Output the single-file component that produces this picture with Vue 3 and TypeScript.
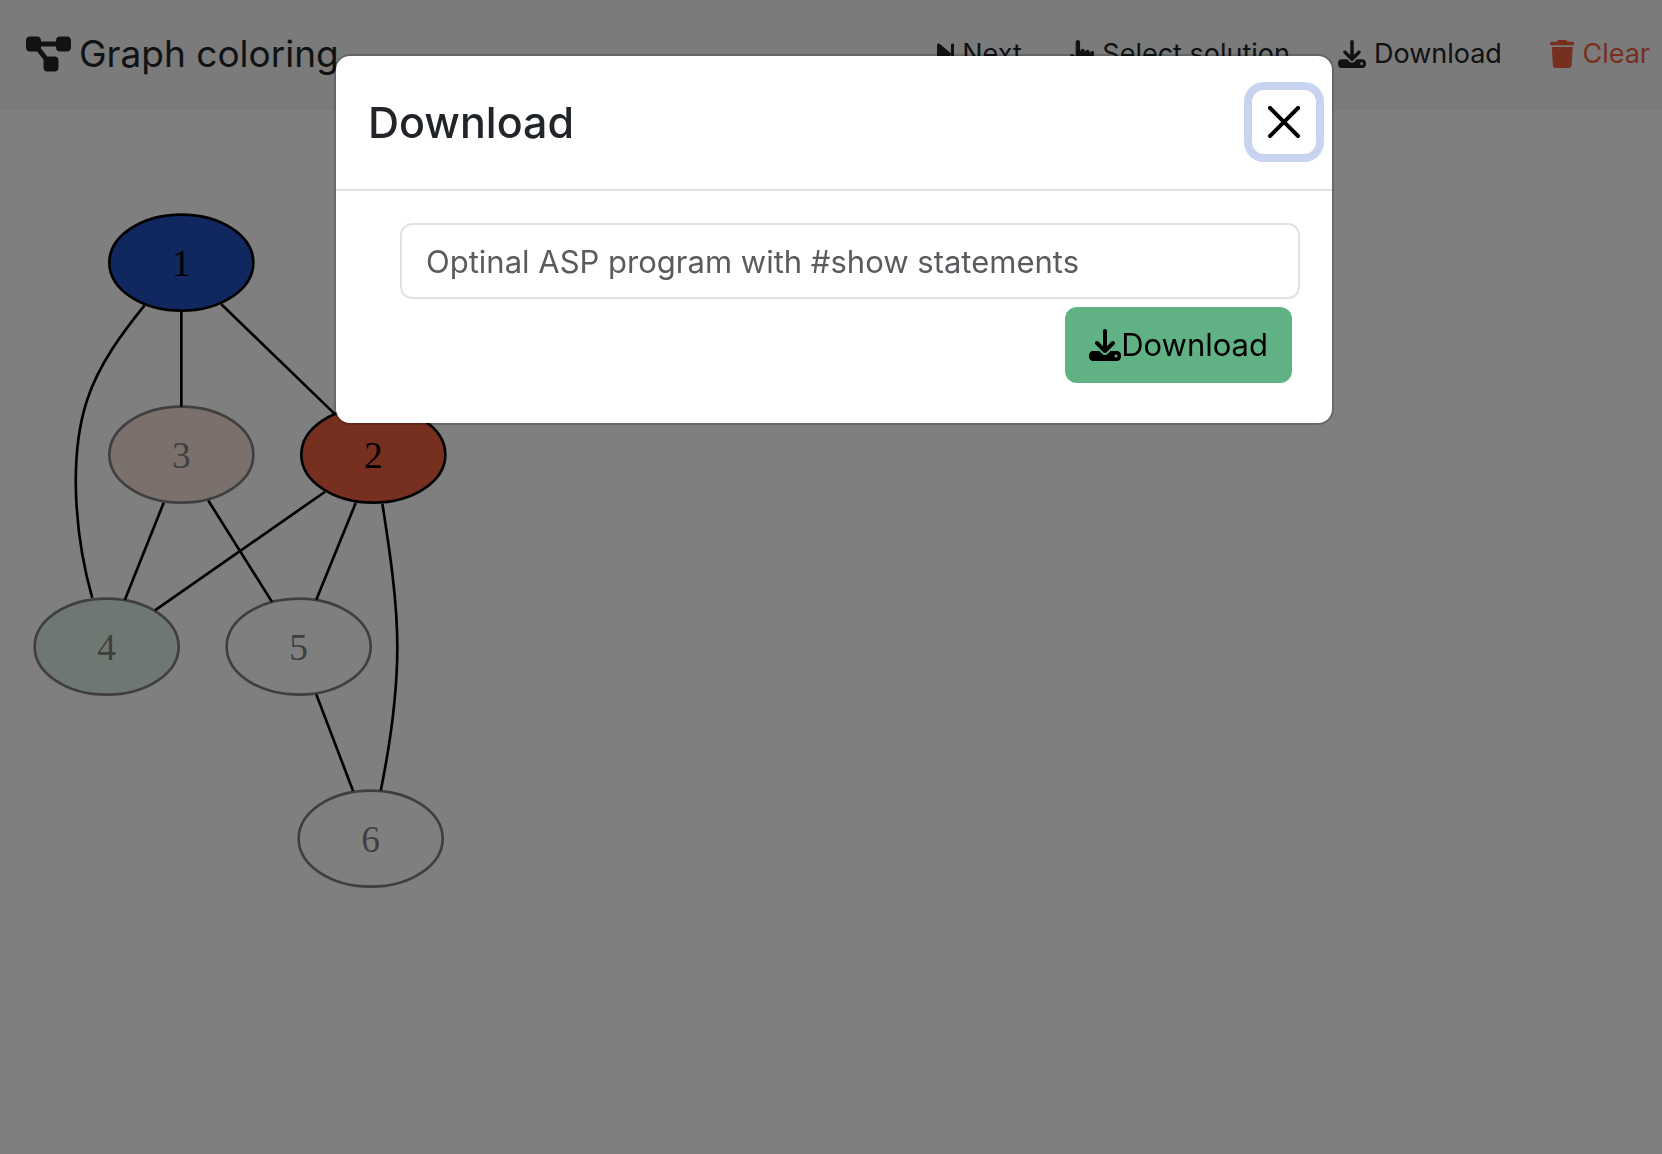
<script setup lang="ts">
import { ref } from 'vue'

interface GraphNode {
  id: number
  x: number
  y: number
  fill: string
  faded: boolean
}

interface MenuItem {
  label: string
  viewBox: string
  path: string
  danger?: boolean
}

const downloadPath =
  'M288 32c0-17.7-14.3-32-32-32s-32 14.3-32 32l0 242.7-73.4-73.4c-12.5-12.5-32.8-12.5-45.3 0s-12.5 32.8 0 45.3l128 128c12.5 12.5 32.8 12.5 45.3 0l128-128c12.5-12.5 12.5-32.8 0-45.3s-32.8-12.5-45.3 0L288 274.7 288 32zM64 352c-35.3 0-64 28.7-64 64l0 32c0 35.3 28.7 64 64 64l384 0c35.3 0 64-28.7 64-64l0-32c0-35.3-28.7-64-64-64l-101.5 0-45.3 45.3c-25 25-65.5 25-90.5 0L165.5 352 64 352zm368 56a24 24 0 1 1 0 48 24 24 0 1 1 0-48z'

const menu: MenuItem[] = [
  {
    label: 'Next',
    viewBox: '0 0 320 512',
    path: 'M287.1 447.1c17.67 0 31.1-14.33 31.1-32V96.03c0-17.67-14.33-32-32-32c-17.67 0-31.1 14.33-31.1 31.1v319.9C255.1 433.6 270.3 447.1 287.1 447.1zM52.51 440.6l192-159.1c7.625-6.436 11.43-15.53 11.43-24.62c0-9.094-3.809-18.18-11.43-24.62l-192-159.1C31.88 54.28 0 68.66 0 96.03v319.9C0 443.3 31.88 457.7 52.51 440.6z',
  },
  {
    label: 'Select solution',
    viewBox: '0 0 448 512',
    path: 'M448 240v96c0 3.084-.356 6.159-1.063 9.162l-32 136C410.686 499.23 394.562 512 376 512H168a40.004 40.004 0 0 1-32.35-16.473l-127.997-176c-12.993-17.866-9.043-42.883 8.822-55.876 17.867-12.994 42.884-9.043 55.877 8.823L104 315.992V40c0-22.091 17.908-40 40-40s40 17.909 40 40v160h8c0-22.091 17.908-40 40-40s40 17.909 40 40v16h8c0-22.091 17.908-40 40-40s40 17.909 40 40v24h8c0-22.091 17.908-40 40-40s40 17.909 40 40z',
  },
  { label: 'Download', viewBox: '0 0 512 512', path: downloadPath },
  {
    label: 'Clear',
    viewBox: '0 0 448 512',
    path: 'M135.2 17.7L128 32 32 32C14.3 32 0 46.3 0 64S14.3 96 32 96l384 0c17.7 0 32-14.3 32-32s-14.3-32-32-32l-96 0-7.2-14.3C307.4 6.8 296.3 0 284.2 0L163.8 0c-12.1 0-23.2 6.8-28.6 17.7zM416 128L32 128 53.2 467c1.6 25.3 22.6 45 47.9 45l245.8 0c25.3 0 46.3-19.7 47.9-45L416 128z',
    danger: true,
  },
]

const nodes: GraphNode[] = [
  { id: 1, x: 55, y: 18, fill: '#204ec0', faded: false },
  { id: 2, x: 127, y: 90, fill: '#ee5e40', faded: false },
  { id: 3, x: 55, y: 90, fill: '#f5c5b9', faded: true },
  { id: 4, x: 27, y: 162, fill: '#bfe1cd', faded: true },
  { id: 5, x: 99, y: 162, fill: 'none', faded: true },
  { id: 6, x: 126, y: 234, fill: 'none', faded: true },
]

const edges: string[] = [
  'M55 36L55 72',
  'M70 33.6L112.4 74.6',
  'M41.2 34C33.5 43.5 24 56 19.5 70C12.5 92 15.4 122 21.6 143.7',
  'M48.4 108L33.8 144.5',
  'M65.1 107.2L89 145.2',
  'M108.9 103.9L45.1 148.4',
  'M120.4 108.1L105.6 144.4',
  'M130.4 108.5C132.8 124 136 144 136 162C136 180 133 200 129.8 215.9',
  'M105.6 179.9L119.4 216.1',
]

const open = ref(true)
const program = ref('')
</script>

<template>
  <div class="app">
    <header class="navbar">
      <a href="#" class="brand">
        <svg class="icon" viewBox="0 0 576 512" aria-hidden="true">
          <path
            d="M0 80C0 53.5 21.5 32 48 32l96 0c26.5 0 48 21.5 48 48l0 16 192 0 0-16c0-26.5 21.5-48 48-48l96 0c26.5 0 48 21.5 48 48l0 96c0 26.5-21.5 48-48 48l-96 0c-26.5 0-48-21.5-48-48l0-16-192 0 0 16c0 1.7-.1 3.4-.3 5L272 288l96 0c26.5 0 48 21.5 48 48l0 96c0 26.5-21.5 48-48 48l-96 0c-26.5 0-48-21.5-48-48l0-96c0-1.7 .1-3.4 .3-5L144 224l-96 0c-26.5 0-48-21.5-48-48L0 80z"
          />
        </svg>
        <span>Graph coloring</span>
      </a>
      <nav class="menu">
        <button
          v-for="item in menu"
          :key="item.label"
          type="button"
          class="menu-item"
          :class="{ danger: item.danger }"
        >
          <svg class="icon" :viewBox="item.viewBox" aria-hidden="true"><path :d="item.path" /></svg>
          <span>{{ item.label }}</span>
        </button>
      </nav>
    </header>

    <main class="canvas">
      <svg class="graph" viewBox="0 0 162 260" role="img" aria-label="Graph">
        <g transform="translate(4 4)">
          <g v-for="node in nodes" :key="node.id" :class="{ faded: node.faded }">
            <ellipse :cx="node.x" :cy="node.y" rx="27" ry="18" :fill="node.fill" stroke="#000" />
            <text :x="node.x" :y="node.y + 5" text-anchor="middle">{{ node.id }}</text>
          </g>
          <path v-for="edge in edges" :key="edge" :d="edge" fill="none" stroke="#000" />
        </g>
      </svg>
    </main>

    <div v-if="open" class="backdrop">
      <section class="modal" role="dialog" aria-modal="true" aria-labelledby="modal-title">
        <div class="modal-header">
          <h1 id="modal-title" class="modal-title">Download</h1>
          <button type="button" class="close" aria-label="Close" @click="open = false">
            <svg viewBox="0 0 16 16" aria-hidden="true">
              <path
                d="M.293.293a1 1 0 0 1 1.414 0L8 6.586 14.293.293a1 1 0 1 1 1.414 1.414L9.414 8l6.293 6.293a1 1 0 0 1-1.414 1.414L8 9.414l-6.293 6.293a1 1 0 0 1-1.414-1.414L6.586 8 .293 1.707a1 1 0 0 1 0-1.414z"
              />
            </svg>
          </button>
        </div>
        <form class="modal-body" @submit.prevent>
          <input
            v-model="program"
            type="text"
            class="field"
            placeholder="Optinal ASP program with #show statements"
            aria-label="Optinal ASP program with #show statements"
          />
          <button type="submit" class="submit">
            <svg class="icon" viewBox="0 0 512 512" aria-hidden="true"><path :d="downloadPath" /></svg>
            <span>Download</span>
          </button>
        </form>
      </section>
    </div>
  </div>
</template>

<style>
body {
  margin: 0;
  background: #fff;
}
</style>

<style scoped>
.app,
.app * {
  box-sizing: border-box;
}

.app {
  min-height: 100vh;
  font-family: Inter, 'Liberation Sans', sans-serif;
  font-size: 31px;
  line-height: 48px;
  color: #212529;
}

button,
input {
  font: inherit;
  color: inherit;
}

.icon {
  display: block;
  height: 1em;
  flex: none;
  fill: currentColor;
}

.navbar {
  display: flex;
  align-items: center;
  justify-content: space-between;
  height: 110px;
  padding: 0 12px 2px 26px;
  background: #f6f6f6;
}

.brand {
  display: flex;
  align-items: center;
  gap: 8px;
  font-size: 37px;
  color: inherit;
  text-decoration: none;
}

.brand .icon {
  height: 40px;
}

.menu {
  display: flex;
  align-items: center;
  gap: 48px;
}

.menu-item {
  display: flex;
  align-items: center;
  gap: 8px;
  padding: 0;
  border: 0;
  background: none;
  font-size: 27px;
}

.menu-item .icon {
  height: 28px;
}

.menu-item.danger {
  color: #ee5e40;
}

.canvas {
  padding: 94px 24px 0;
}

.graph {
  display: block;
  width: 432px;
}

.graph text {
  font-family: 'Liberation Serif', serif;
  font-size: 14px;
}

.faded {
  opacity: 0.5;
}

.backdrop {
  position: fixed;
  inset: 0;
  padding: 54px 0 0 6px;
  background: rgba(0, 0, 0, 0.5);
}

.modal {
  max-width: 1000px;
  margin: 0 auto;
  border: 2px solid rgba(0, 0, 0, 0.175);
  border-radius: 16px;
  background: #fff;
  background-clip: padding-box;
}

.modal-header {
  display: flex;
  align-items: center;
  justify-content: space-between;
  height: 135px;
  padding: 0 16px 2px 32px;
  border-bottom: 2px solid #dee2e6;
}

.modal-title {
  margin: 0;
  font-size: 43px;
  font-weight: 500;
}

.close {
  width: 64px;
  height: 64px;
  padding: 16px;
  border: 0;
  border-radius: 12px;
  background: #fff;
  box-shadow: 0 0 0 8px #c8d3f1;
}

.close svg {
  display: block;
  width: 32px;
  height: 32px;
}

.modal-body {
  display: flex;
  flex-direction: column;
  align-items: flex-end;
  gap: 8px;
  padding: 32px 32px 40px 64px;
}

.field {
  width: 100%;
  height: 76px;
  padding: 0 24px;
  border: 2px solid #dee2e6;
  border-radius: 12px;
  background: #fff;
  outline: 0;
}

.field::placeholder {
  color: #595c5f;
  opacity: 1;
}

.submit {
  display: flex;
  align-items: center;
  height: 76px;
  margin-right: 8px;
  padding: 0 24px;
  border: 0;
  border-radius: 12px;
  background: #60b183;
  color: #000;
}

.submit .icon {
  height: 32px;
}
</style>
